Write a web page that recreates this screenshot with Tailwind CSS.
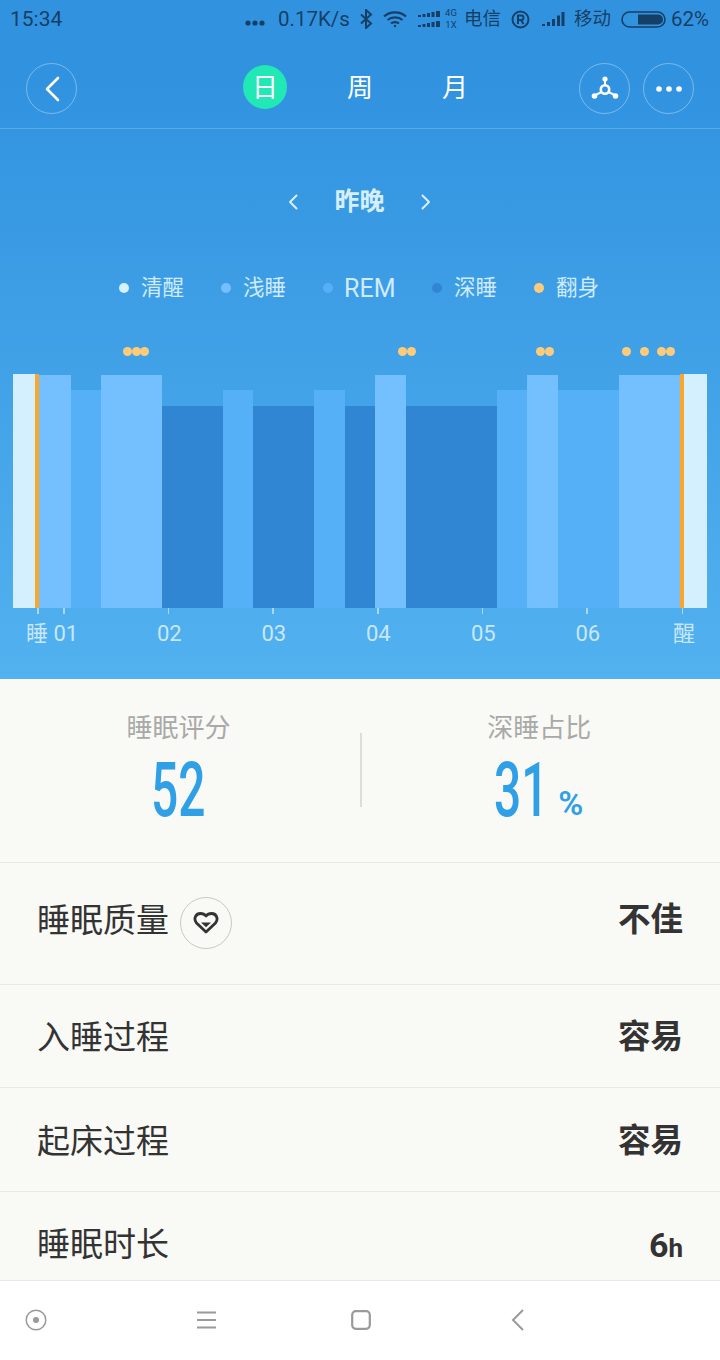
<!DOCTYPE html>
<html lang="zh">
<head>
<meta charset="UTF-8">
<meta name="viewport" content="width=device-width, initial-scale=1.0">
<title>睡眠</title>
<script src="https://cdn.jsdelivr.net/npm/@tailwindcss/browser@4"></script>
</head>
<body class="bg-white">
<div class="w-[720px] h-[1360px] flex flex-col overflow-hidden font-['Roboto','Noto_Sans_CJK_SC',sans-serif]">

  <!-- blue header + chart -->
  <div class="h-[679px] shrink-0 flex flex-col bg-gradient-to-b from-[#3193e0] from-[12%] to-[#52b1ef]">

    <!-- status bar -->
    <div class="h-[38px] flex items-center pl-[10px] text-[20.500px] text-[#163f66] leading-none">
      <span class="w-[52px] text-[21px]">15:34</span>
      <svg class="ml-[183px] mt-[8px]" width="20" height="6" viewBox="0 0 20 6" fill="#163f66"><circle cx="3" cy="3" r="2.6"/><circle cx="10" cy="3" r="2.6"/><circle cx="17" cy="3" r="2.6"/></svg>
      <span class="ml-[13px] w-[71px]">0.17K/s</span>
      <svg class="ml-[11px]" width="13" height="20" viewBox="0 0 13 20" fill="none" stroke="#163f66" stroke-width="2"><path d="M1 5.500l10 9-5 4.500V1l5 4.500-10 9"/></svg>
      <svg class="ml-[10px]" width="24" height="17" viewBox="0 0 24 17" fill="none" stroke="#163f66" stroke-width="2.200"><path d="M1 5.500c6-5.500 16-5.500 22 0M4.500 9c4-3.500 11-3.500 15 0M8 12.500c2.200-1.800 5.800-1.800 8 0"/><circle cx="12" cy="15" r="1.200" fill="#163f66" stroke="none"/></svg>
      <svg class="ml-[11px]" width="22" height="18" viewBox="0 0 22 18" fill="#163f66"><path d="M0 5h3v2H0zM4.500 4h3v3h-3zM9 3h3v4H9zM13.500 2h3v5h-3zM18 1h4v6h-4zM0 15h3v2H0zM4.500 14h3v3h-3zM9 13h3v4H9zM13.500 12h3v5h-3zM18 11h4v6h-4z"/></svg>
      <div class="ml-[6px] w-[10px] flex flex-col items-center text-[9.500px] leading-[12px] font-normal"><span>4G</span><span>1X</span></div>
      <span class="ml-[8px] text-[18.500px] w-[37px]">电信</span>
      <svg class="ml-[10px]" width="19" height="19" viewBox="0 0 19 19" fill="none" stroke="#163f66" stroke-width="2"><circle cx="9.500" cy="9.500" r="8"/><path d="M7 14V5.500h3.200a2.200 2.200 0 0 1 0 4.500H7M10 10l2.500 4"/></svg>
      <svg class="ml-[12px]" width="23" height="16" viewBox="0 0 23 16" fill="#163f66"><path d="M0 13h3v2H0zM5 11h3v4H5zM10 8h3v7h-3zM15 4.500h3V15h-3zM19.500 1H22.500V15H19.500z"/></svg>
      <span class="ml-[9px] text-[18.500px] w-[38px]">移动</span>
      <svg class="ml-[9px]" width="45" height="17" viewBox="0 0 45 17"><rect x="1" y="1" width="43" height="15" rx="7.500" fill="none" stroke="#163f66" stroke-width="1.600"/><path d="M17 3.500h20a5 5 0 0 1 0 10H17z" fill="#163f66"/></svg>
      <span class="ml-[5px] text-[20.500px]">62%</span>
    </div>

    <!-- top nav -->
    <div class="h-[91px] border-b border-white/20 relative flex items-center px-[26px] pt-[11px]">
      <div class="w-[51px] h-[51px] rounded-full border border-white/35 flex items-center justify-center">
        <svg width="16" height="26" viewBox="0 0 16 26" fill="none" stroke="white" stroke-width="2.600" stroke-linecap="round" stroke-linejoin="round"><path d="M14 2L3 13l11 11"/></svg>
      </div>
      <div class="absolute left-[243px] top-[27px] flex items-center text-white text-[26px] leading-none">
        <span class="w-[44px] h-[44px] rounded-full bg-[#22e8b6] flex items-center justify-center pt-[1px]">日</span>
        <span class="ml-[51px] w-[44px] text-center pt-[2px]">周</span>
        <span class="ml-[51px] w-[44px] text-center pt-[2px]">月</span>
      </div>
      <div class="ml-auto flex gap-[13px]">
        <div class="w-[51px] h-[51px] rounded-full border border-white/35 flex items-center justify-center">
          <svg width="28" height="26" viewBox="0 0 28 26" fill="none" stroke="white" stroke-width="2"><circle cx="14" cy="13.500" r="4.200" stroke-width="2.600"/><path d="M14 9V3M10.500 16L3.500 19.500M17.500 16l7 3.500"/><circle cx="14" cy="3" r="2.600" fill="white" stroke="none"/><circle cx="3.500" cy="20" r="2.800" fill="white" stroke="none"/><circle cx="24.500" cy="20" r="2.800" fill="white" stroke="none"/></svg>
        </div>
        <div class="w-[51px] h-[51px] rounded-full border border-white/35 flex items-center justify-center">
          <svg width="26" height="6" viewBox="0 0 26 6" fill="white"><circle cx="3" cy="3" r="2.800"/><circle cx="13" cy="3" r="2.800"/><circle cx="23" cy="3" r="2.800"/></svg>
        </div>
      </div>
    </div>

    <!-- date switch -->
    <div class="h-[145px] flex items-center justify-center text-[#d6effd] pr-[1px]">
      <svg width="10" height="16" viewBox="0 0 10 16" fill="none" stroke="#d6effd" stroke-width="2" stroke-linecap="round" stroke-linejoin="round"><path d="M8.500 1.500L2 8l6.500 6.500"/></svg>
      <span class="mx-[36px] text-[25px] font-bold leading-none">昨晚</span>
      <svg width="10" height="16" viewBox="0 0 10 16" fill="none" stroke="#d6effd" stroke-width="2" stroke-linecap="round" stroke-linejoin="round"><path d="M1.500 1.500L8 8l-6.500 6.500"/></svg>
    </div>

    <!-- legend -->
    <div class="h-[28px] flex items-center pl-[119px] gap-[37px] text-[21.500px] text-[#cfebfd] leading-none">
      <div class="flex items-center gap-[12px]"><span class="w-[10px] h-[10px] rounded-full bg-[#d6f1ff]"></span>清醒</div>
      <div class="flex items-center gap-[12px]"><span class="w-[10px] h-[10px] rounded-full bg-[#74c0ff]"></span>浅睡</div>
      <div class="flex items-center gap-[11px]"><span class="w-[10px] h-[10px] rounded-full bg-[#56b0f8]"></span><span class="text-[25px] w-[51px]">REM</span></div>
      <div class="flex items-center gap-[12px]"><span class="w-[10px] h-[10px] rounded-full bg-[#3186d4]"></span>深睡</div>
      <div class="flex items-center gap-[12px]"><span class="w-[10px] h-[10px] rounded-full bg-[#fdcb7a]"></span>翻身</div>
    </div>

    <!-- turn-over markers -->
    <div class="relative h-[72px] shrink-0">
      <span class="absolute top-[45px] left-[122.500px] w-[9px] h-[9px] rounded-full bg-[#fdcb7a]"></span>
      <span class="absolute top-[45px] left-[131.500px] w-[9px] h-[9px] rounded-full bg-[#fdcb7a]"></span>
      <span class="absolute top-[45px] left-[140px] w-[9px] h-[9px] rounded-full bg-[#fdcb7a]"></span>
      <span class="absolute top-[45px] left-[398px] w-[9px] h-[9px] rounded-full bg-[#fdcb7a]"></span>
      <span class="absolute top-[45px] left-[407px] w-[9px] h-[9px] rounded-full bg-[#fdcb7a]"></span>
      <span class="absolute top-[45px] left-[536px] w-[9px] h-[9px] rounded-full bg-[#fdcb7a]"></span>
      <span class="absolute top-[45px] left-[545px] w-[9px] h-[9px] rounded-full bg-[#fdcb7a]"></span>
      <span class="absolute top-[45px] left-[622px] w-[9px] h-[9px] rounded-full bg-[#fdcb7a]"></span>
      <span class="absolute top-[45px] left-[639.500px] w-[9px] h-[9px] rounded-full bg-[#fdcb7a]"></span>
      <span class="absolute top-[45px] left-[657px] w-[9px] h-[9px] rounded-full bg-[#fdcb7a]"></span>
      <span class="absolute top-[45px] left-[665.500px] w-[9px] h-[9px] rounded-full bg-[#fdcb7a]"></span>
    </div>

    <!-- sleep stage bars -->
    <div class="flex items-end h-[234px] shrink-0 ml-[13px] w-[694px]">
      <div class="w-[22px] h-[234px] bg-[#d4f0ff]"></div>
      <div class="w-[4px] h-[234px] bg-[#f9a62b]"></div>
      <div class="w-[32px] h-[233px] bg-[#74c0ff]"></div>
      <div class="w-[30px] h-[218px] bg-[#56b0f8]"></div>
      <div class="w-[61px] h-[233px] bg-[#74c0ff]"></div>
      <div class="w-[61px] h-[202px] bg-[#3186d4]"></div>
      <div class="w-[30px] h-[218px] bg-[#56b0f8]"></div>
      <div class="w-[61px] h-[202px] bg-[#3186d4]"></div>
      <div class="w-[31px] h-[218px] bg-[#56b0f8]"></div>
      <div class="w-[30px] h-[202px] bg-[#3186d4]"></div>
      <div class="w-[31px] h-[233px] bg-[#74c0ff]"></div>
      <div class="w-[91px] h-[202px] bg-[#3186d4]"></div>
      <div class="w-[30px] h-[218px] bg-[#56b0f8]"></div>
      <div class="w-[31px] h-[233px] bg-[#74c0ff]"></div>
      <div class="w-[61px] h-[218px] bg-[#56b0f8]"></div>
      <div class="w-[61px] h-[233px] bg-[#74c0ff]"></div>
      <div class="w-[4px] h-[234px] bg-[#f9a62b]"></div>
      <div class="w-[23px] h-[234px] bg-[#d4f0ff]"></div>
    </div>

    <!-- time axis -->
    <div class="relative flex-1 text-[22px] leading-none text-[#c9e7fb]">
      <span class="absolute top-0 left-[37px] w-[1.500px] h-[6px] bg-white/50"></span>
      <span class="absolute top-0 left-[63px] w-[1.500px] h-[6px] bg-white/50"></span>
      <span class="absolute top-0 left-[167.500px] w-[1.500px] h-[6px] bg-white/50"></span>
      <span class="absolute top-0 left-[272px] w-[1.500px] h-[6px] bg-white/50"></span>
      <span class="absolute top-0 left-[377px] w-[1.500px] h-[6px] bg-white/50"></span>
      <span class="absolute top-0 left-[481.500px] w-[1.500px] h-[6px] bg-white/50"></span>
      <span class="absolute top-0 left-[586px] w-[1.500px] h-[6px] bg-white/50"></span>
      <span class="absolute top-0 left-[681.500px] w-[1.500px] h-[6px] bg-white/50"></span>
      <span class="absolute top-[15px] left-[26px]">睡 01</span>
      <span class="absolute top-[15px] left-[157px]">02</span>
      <span class="absolute top-[15px] left-[261.500px]">03</span>
      <span class="absolute top-[15px] left-[366px]">04</span>
      <span class="absolute top-[15px] left-[471px]">05</span>
      <span class="absolute top-[15px] left-[575.500px]">06</span>
      <span class="absolute top-[15px] left-[673px]">醒</span>
    </div>
  </div>

  <!-- summary and detail rows -->
  <div class="flex-1 min-h-0 overflow-hidden bg-[#f9f9f5]">
    <div class="h-[184px] border-b border-[#e8e8e4] flex items-start relative">
      <div class="w-[360px] flex flex-col items-center pt-[34px] pr-[3px]">
        <span class="text-[26px] leading-[30px] text-[#a9a9a9]">睡眠评分</span>
        <span class="mt-[13px] text-[76px] leading-[68px] font-medium text-[#2f9fe6] scale-x-[63%]">52</span>
      </div>
      <div class="mt-[54px] w-[1.500px] h-[74px] bg-[#dcdcd8]"></div>
      <div class="flex-1 flex flex-col items-center pt-[34px]">
        <span class="text-[26px] leading-[30px] text-[#a9a9a9] pr-[3px]">深睡占比</span>
        <div class="mt-[13px] flex items-end h-[68px] gap-[12px] pr-[2px]">
          <div class="w-[50px] flex justify-center">
            <span class="text-[76px] leading-[68px] font-medium text-[#2f9fe6] scale-x-[63%]">31</span>
          </div>
          <span class="text-[34px] leading-[28px] font-semibold text-[#2f9fe6] mb-[7px]">%</span>
        </div>
      </div>
    </div>

    <div class="h-[122px] border-b border-[#e8e8e4] flex items-center justify-between pl-[37px] pr-[37px] pb-[6px] text-[#333]">
      <div class="flex items-center gap-[11px]">
        <span class="text-[33px] leading-none">睡眠质量</span>
        <div class="mt-[4px] w-[52px] h-[52px] rounded-full border border-[#c9c9c6] flex items-center justify-center">
          <svg width="26" height="23" viewBox="0 0 26 23" fill="none" stroke="#333" stroke-width="2.800" stroke-linejoin="round"><path d="M13 21L3.500 12C.5 8.500 2 2.500 7.500 2.500c2.500 0 4.300 1 5.500 2.500 1.200-1.500 3-2.500 5.500-2.500C24 2.500 25.500 8.500 22.500 12z"/><path d="M8 11.500h10l-5 4.800z" fill="#333" stroke="none"/></svg>
        </div>
      </div>
      <span class="text-[32.500px] font-bold leading-none">不佳</span>
    </div>

    <div class="h-[103px] border-b border-[#e8e8e4] flex items-center justify-between pl-[37px] pr-[37px] pt-[3px] text-[#333]">
      <span class="text-[33px] leading-none">入睡过程</span>
      <span class="text-[32.500px] font-bold leading-none">容易</span>
    </div>
    <div class="h-[104px] border-b border-[#e8e8e4] flex items-center justify-between pl-[37px] pr-[37px] pt-[3px] text-[#333]">
      <span class="text-[33px] leading-none">起床过程</span>
      <span class="text-[32.500px] font-bold leading-none">容易</span>
    </div>
    <div class="h-[103px] flex items-center justify-between pl-[37px] pr-[37px] pt-[2px] text-[#333]">
      <span class="text-[33px] leading-none">睡眠时长</span>
      <span class="font-bold leading-none"><span class="text-[34px]">6</span><span class="text-[26px]">h</span></span>
    </div>
  </div>

  <!-- android nav bar -->
  <div class="h-[80px] shrink-0 bg-white border-t border-[#e9e9e9] flex items-center pb-[1px]">
    <svg class="ml-[25px]" width="22" height="22" viewBox="0 0 22 22" fill="none" stroke="#9a9a9a" stroke-width="1.500"><circle cx="11" cy="11" r="9.800"/><circle cx="11" cy="11" r="3" fill="#9a9a9a" stroke="none"/></svg>
    <svg class="ml-[150px]" width="19" height="18" viewBox="0 0 19 18" fill="none" stroke="#9a9a9a" stroke-width="2"><path d="M0 1.500h19M0 9h19M0 16.500h19"/></svg>
    <svg class="ml-[135px]" width="20" height="20" viewBox="0 0 20 20" fill="none" stroke="#9a9a9a" stroke-width="2.200"><rect x="1.200" y="1.200" width="17.600" height="17.600" rx="3.500"/></svg>
    <svg class="ml-[140px]" width="13" height="22" viewBox="0 0 13 22" fill="none" stroke="#9a9a9a" stroke-width="2"><path d="M12 1L2 11l10 10"/></svg>
  </div>
</div>
</body>
</html>
